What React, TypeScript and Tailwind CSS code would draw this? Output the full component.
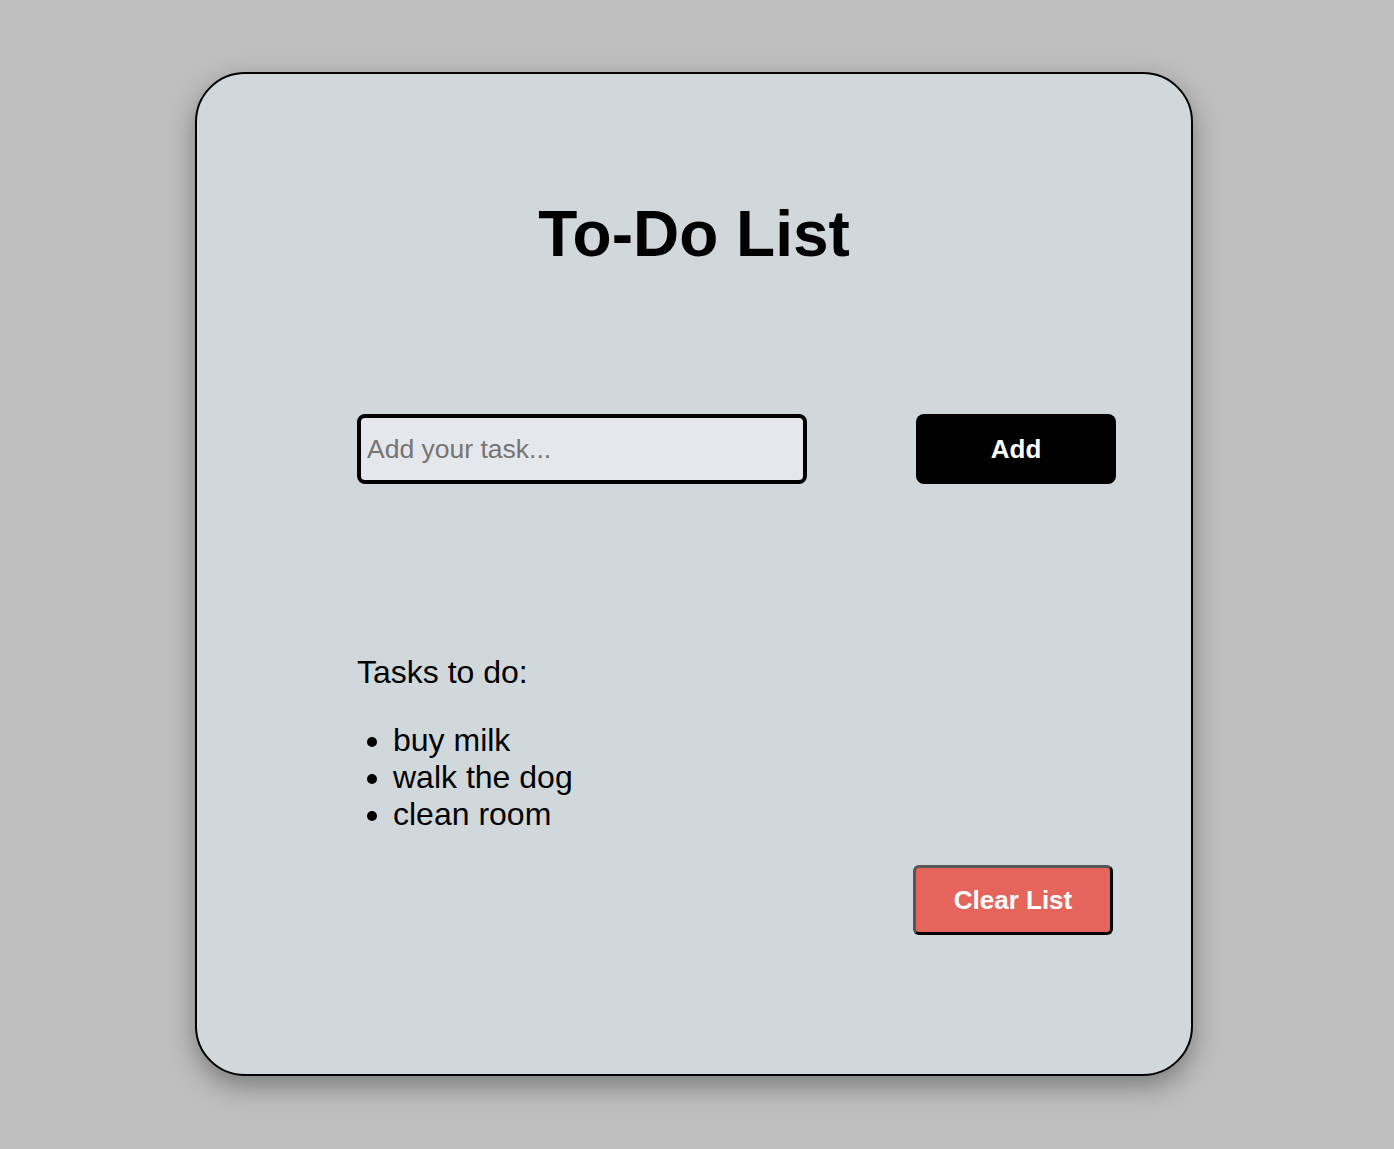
import React from "react";

const tasks = ["buy milk", "walk the dog", "clean room"];

export default function App() {
  return (
    <div className="min-h-[1149px] w-full bg-[#bebebe] pt-[72px] font-['Liberation_Sans',Arial,sans-serif] text-black">
      <div className="ml-[195px] flex h-[1004px] w-[998px] flex-col rounded-[50px] border-2 border-black bg-[#d1d8db] pt-[123px] shadow-[0_10px_26px_rgba(0,0,0,0.35)]">
        <h1 className="text-center text-[64px] font-bold leading-[normal]">To-Do List</h1>

        <div className="ml-[160px] mt-[143px] flex w-[759px] items-center justify-between">
          <input
            type="text"
            placeholder="Add your task..."
            className="h-[70px] w-[450px] rounded-lg border-4 border-black bg-[#e4e7eb] px-[6px] text-[26.5px] outline-none placeholder:text-[#757575]"
          />
          <button className="h-[70px] w-[200px] rounded-lg bg-black text-[26px] font-bold text-white">
            Add
          </button>
        </div>

        <div className="ml-[160px] mt-[170px] w-[759px]">
          <p className="text-[32px] leading-[normal]">Tasks to do:</p>
          <ul className="mt-[31px] list-disc pl-9 text-[32px] leading-[normal]">
            {tasks.map((task, index) => (
              <li key={index}>{task}</li>
            ))}
          </ul>
          <div className="mt-[32px] flex justify-end pr-[3px]">
            <button className="h-[70px] w-[200px] rounded-md border-[3px] border-b-black border-l-[#555555] border-r-black border-t-[#555555] bg-[#e5655c] text-[26px] font-bold text-white">
              Clear List
            </button>
          </div>
        </div>
      </div>
    </div>
  );
}
